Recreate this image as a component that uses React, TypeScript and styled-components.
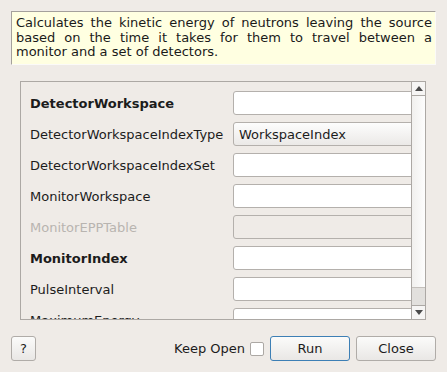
import styled, { createGlobalStyle } from 'styled-components';

const GlobalStyle = createGlobalStyle`
    html, body {
        margin: 0;
        padding: 0;
        background: #efebe7;
    }
    body {
        font-family: 'DejaVu Sans', 'Liberation Sans', sans-serif;
        font-size: 13px;
        color: #1c1c1c;
    }
    * {
        box-sizing: border-box;
    }
`;

const Dialog = styled.div`
    width: 447px;
    height: 372px;
    padding: 11px 11px 11px 11px;
    display: flex;
    flex-direction: column;
    overflow: hidden;
`;

const Description = styled.div`
    height: 54px;
    background: #ffffe1;
    border-top: 1px solid #a4a09c;
    border-left: 1px solid #a4a09c;
    border-right: 1px solid #fbfaf8;
    border-bottom: 1px solid #fbfaf8;
    padding: 4px 3px 0 4px;
    font-size: 13px;
    line-height: 14.7px;
    text-align: justify;
    color: #1a1a1a;
`;

const ScrollArea = styled.div`
    margin: 16px 10px 0 9px;
    height: 239px;
    border: 1px solid #aca8a4;
    display: flex;
`;

const Viewport = styled.div`
    flex: 1;
    overflow: hidden;
    padding: 9px 0 0 9px;
    display: flex;
    flex-direction: column;
    gap: 7px;
`;

const Row = styled.div`
    display: flex;
    align-items: center;
    height: 24px;
    flex-shrink: 0;
`;

const Label = styled.div<{ $bold?: boolean; $disabled?: boolean }>`
    width: 203px;
    flex-shrink: 0;
    font-weight: ${(p) => (p.$bold ? 'bold' : 'normal')};
    color: ${(p) => (p.$disabled ? '#b8b4b0' : '#1c1c1c')};
    white-space: nowrap;
`;

const Input = styled.div<{ $disabled?: boolean }>`
    flex: 1;
    margin-right: -6px;
    height: 24px;
    border: 1px solid #b4b0ac;
    border-radius: 3px;
    background: ${(p) => (p.$disabled ? '#efebe7' : '#ffffff')};
`;

const Combo = styled.div`
    flex: 1;
    margin-right: -6px;
    height: 24px;
    border: 1px solid #b4b0ac;
    border-radius: 3px;
    background: linear-gradient(#fdfdfd, #ebe9e7);
    padding-left: 5px;
    display: flex;
    align-items: center;
`;

const ScrollBar = styled.div`
    width: 14px;
    border-left: 1px solid #aca8a4;
    display: flex;
    flex-direction: column;
`;

const ArrowButton = styled.div<{ $down?: boolean }>`
    height: 14px;
    flex-shrink: 0;
    background: #f6f5f4;
    display: flex;
    align-items: center;
    justify-content: center;
    ${(p) => (p.$down ? 'border-top: 1px solid #aca8a4;' : 'border-bottom: 1px solid #aca8a4;')}
`;

const Handle = styled.div<{ $size: number }>`
    height: ${(p) => p.$size}px;
    flex-shrink: 0;
    background: linear-gradient(to right, #f1f0ee, #fdfdfd);
    border-bottom: 1px solid #c4c0bc;
`;

const Track = styled.div`
    flex: 1;
    background: #e2e0dd;
`;

const Footer = styled.div`
    margin-top: 16px;
    display: flex;
    align-items: center;
    height: 25px;
`;

const Button = styled.button<{ $default?: boolean; $width: number }>`
    width: ${(p) => p.$width}px;
    height: 25px;
    font-family: 'DejaVu Sans', 'Liberation Sans', sans-serif;
    font-size: 13px;
    color: #1c1c1c;
    border: 1px solid ${(p) => (p.$default ? '#3d7fb5' : '#b0aca8')};
    border-radius: 3px;
    background: linear-gradient(#fbfbfa, #e9e7e5);
    padding: 0;
`;

const Spacer = styled.div`
    flex: 1;
`;

const KeepOpen = styled.label`
    display: flex;
    align-items: center;
    gap: 5px;
    margin-right: 6px;
`;

const CheckBox = styled.span`
    width: 14px;
    height: 14px;
    background: #ffffff;
    border: 1px solid #aca8a4;
    border-radius: 2px;
`;

const Triangle = ({ down }: { down?: boolean }) => (
    <svg width="8" height="5" viewBox="0 0 8 5">
        <polygon points={down ? '0,0 8,0 4,5' : '4,0 8,5 0,5'} fill="#4a4a4a" />
    </svg>
);

const rows = [
    { label: 'DetectorWorkspace', bold: true },
    { label: 'DetectorWorkspaceIndexType', combo: 'WorkspaceIndex' },
    { label: 'DetectorWorkspaceIndexSet' },
    { label: 'MonitorWorkspace' },
    { label: 'MonitorEPPTable', disabled: true },
    { label: 'MonitorIndex', bold: true },
    { label: 'PulseInterval' },
    { label: 'MaximumEnergy' },
];

function App() {
    return (
        <>
            <GlobalStyle />
            <Dialog>
                <Description>
                    Calculates the kinetic energy of neutrons leaving the source based on the time it takes
                    for them to travel between a monitor and a set of detectors.
                </Description>
                <ScrollArea>
                    <Viewport>
                        {rows.map((row) => (
                            <Row key={row.label}>
                                <Label $bold={row.bold} $disabled={row.disabled}>
                                    {row.label}
                                </Label>
                                {row.combo ? (
                                    <Combo>{row.combo}</Combo>
                                ) : (
                                    <Input $disabled={row.disabled} />
                                )}
                            </Row>
                        ))}
                    </Viewport>
                    <ScrollBar>
                        <ArrowButton>
                            <Triangle />
                        </ArrowButton>
                        <Handle $size={192} />
                        <Track />
                        <ArrowButton $down>
                            <Triangle down />
                        </ArrowButton>
                    </ScrollBar>
                </ScrollArea>
                <Footer>
                    <Button $width={25}>?</Button>
                    <Spacer />
                    <KeepOpen>
                        Keep Open
                        <CheckBox />
                    </KeepOpen>
                    <Button $default $width={80}>
                        Run
                    </Button>
                    <Button $width={80} style={{ marginLeft: 6 }}>
                        Close
                    </Button>
                </Footer>
            </Dialog>
        </>
    );
}

export default App;
